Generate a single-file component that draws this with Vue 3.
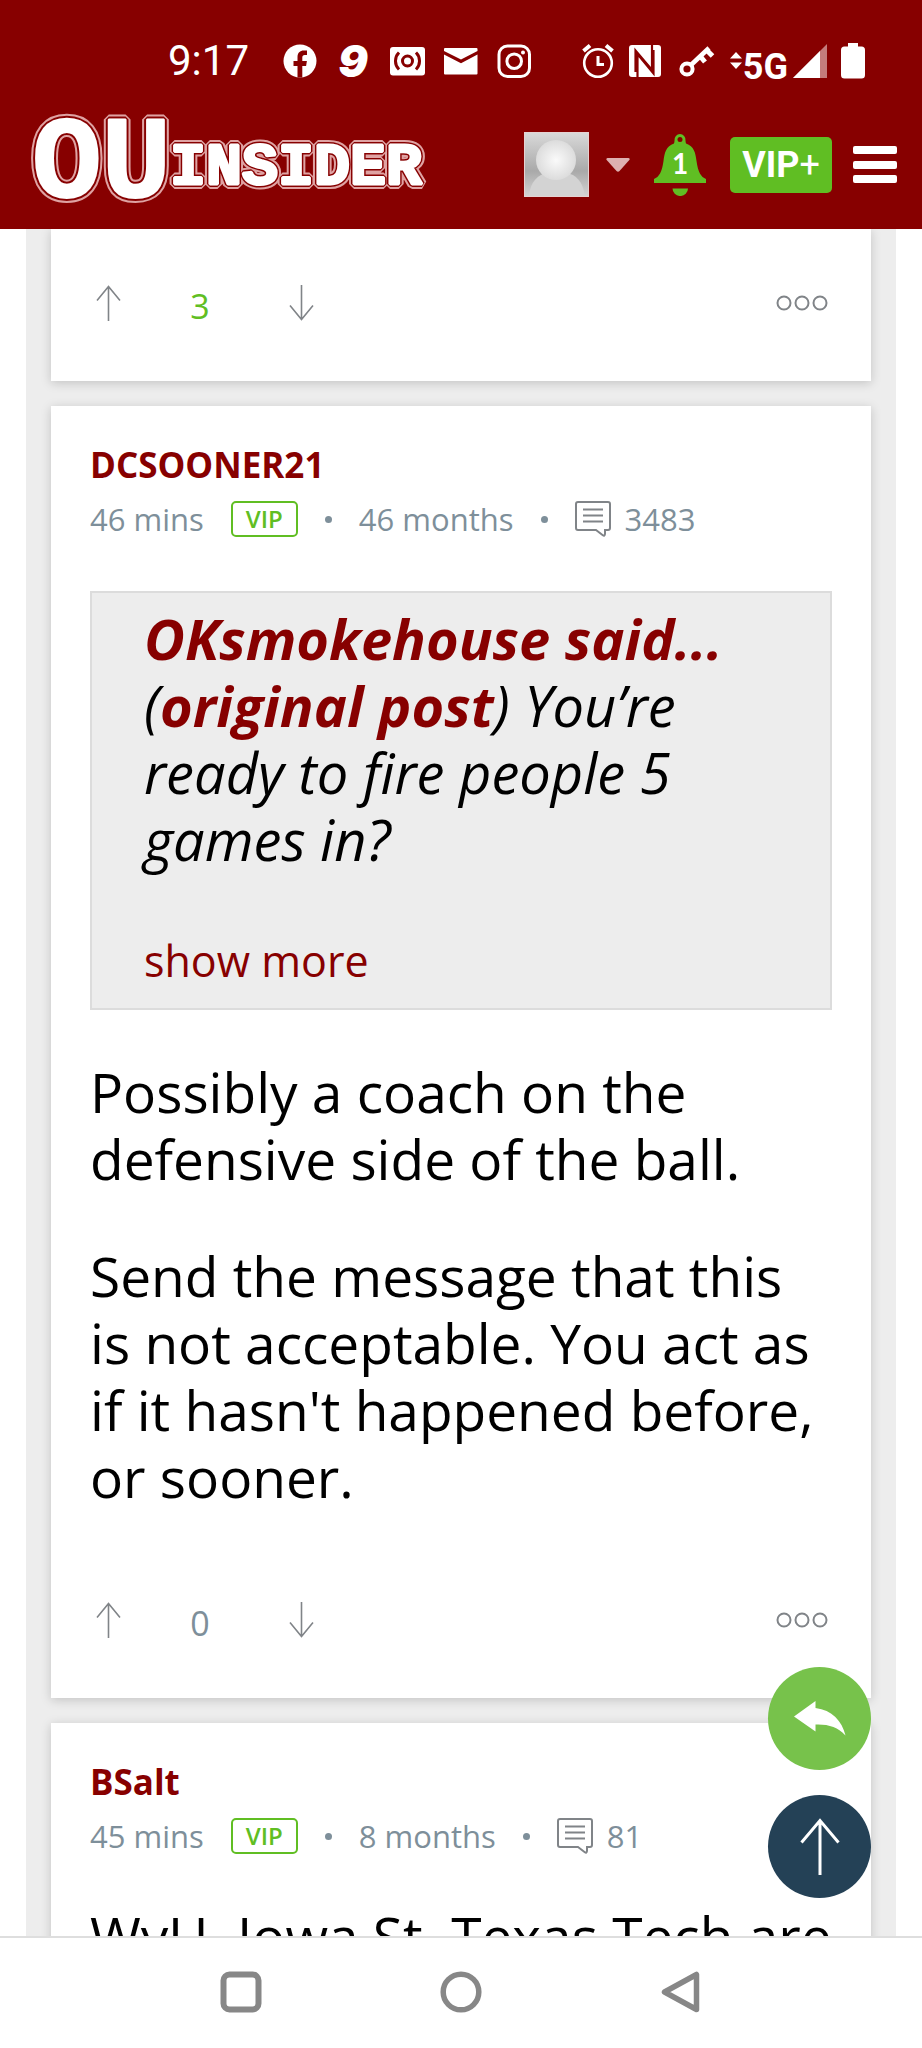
<script setup>
const posts = [
  { id: 1, votes: 3, liked: true },
  {
    id: 2,
    author: 'DCSOONER21',
    age: '46 mins',
    tenure: '46 months',
    count: '3483',
    quote: true,
    paragraphs: [
      'Possibly a coach on the defensive side of the ball.',
      "Send the message that this is not acceptable. You act as if it hasn't happened before, or sooner."
    ],
    votes: 0
  },
  {
    id: 3,
    author: 'BSalt',
    age: '45 mins',
    tenure: '8 months',
    count: '81',
    paragraphs: ['WyU, Iowa St, Texas Tech are'],
    votes: 0
  }
]
</script>

<template>
  <div class="screen">
    <header class="top">
      <div class="status">
        <span class="time">9:17</span>
        <div class="notices">
          <svg width="34" height="34" viewBox="0 0 34 34">
            <circle cx="17" cy="17" r="16.500" fill="#fff" />
            <path d="M14.500 33.500V22H10.500v-5h4v-4c0-4.300 2.500-6.500 6.300-6.500h3.200v4.500h-2.300c-1.700 0-2.400.9-2.400 2.500V17h4.600l-.8 5h-3.800v11.500z" fill="#870000" />
          </svg>
          <span class="nine">9</span>
          <svg width="36" height="34" viewBox="0 0 36 34">
            <rect x="1" y="3" width="35" height="28.500" rx="3" fill="#fff" />
            <g fill="none" stroke="#870000" stroke-width="3">
              <circle cx="18.500" cy="17" r="5" />
              <path d="M10 8.500a12 12 0 0 0 0 17M27 8.500a12 12 0 0 1 0 17" />
            </g>
          </svg>
          <svg width="34" height="34" viewBox="0 0 34 34">
            <path d="M0 5q0-1 1-1h31.500q1 0 1 1v2L17 15.500 0 7zM0 10.500l17 8.700 16.500-8.700V29.500q0 1-1 1H1q-1 0-1-1z" fill="#fff" />
          </svg>
          <svg width="34" height="34" viewBox="0 0 34 34" fill="none" stroke="#fff" stroke-width="3">
            <rect x="2" y="2" width="30.500" height="30.500" rx="8.500" />
            <circle cx="17.200" cy="17.200" r="7.300" />
            <circle cx="26" cy="8.500" r="2" fill="#fff" stroke="none" />
          </svg>
        </div>
        <div class="system">
          <svg width="32" height="36" viewBox="0 0 32 36" fill="none" stroke="#fff" stroke-width="2.600">
            <circle cx="16" cy="20" r="13.800" />
            <path d="M16 13v8.500h6" stroke-width="3" />
            <path d="M1.500 8l6.500-5.500M30.500 8L24 2.500" stroke-width="4" />
          </svg>
          <svg width="36" height="34" viewBox="0 0 36 34">
            <rect x="2" y="1" width="32" height="32" rx="3" fill="#fff" />
            <path d="M8.500 28V6.500L25 26V1M10.500 33V10L26.500 29.500V6" fill="none" stroke="#870000" stroke-width="2.200" />
          </svg>
          <svg width="40" height="34" viewBox="0 0 40 34" fill="none" stroke="#fff">
            <circle cx="11" cy="25" r="5.600" stroke-width="4" />
            <path d="M15 21L33 4" stroke-width="4.500" />
            <path d="M24 12l5 6M30.500 6l6 6" stroke-width="5" />
          </svg>
          <div class="network">
            <svg width="14" height="34" viewBox="0 0 14 34" fill="#fff">
              <path d="M1 14.500L7 8l6 6.500zM1 18.500h12L7 25z" />
            </svg>
            <span class="five-g">5G</span>
            <svg class="signal" width="36" height="36" viewBox="0 0 36 36">
              <path d="M35 1v34H1z" fill="#c47c7c" />
              <path d="M28 8v27H1z" fill="#fff" />
            </svg>
          </div>
          <svg width="24" height="36" viewBox="0 0 24 36">
            <path d="M7 0h10v3.500h3.500Q24 3.500 24 7v25q0 3.500-3.500 3.500h-17Q0 35.500 0 32V7q0-3.500 3.500-3.500H7z" fill="#fff" />
          </svg>
        </div>
      </div>

      <div class="bar">
        <a class="logo" href="#" aria-label="OU Insider">
          <svg width="396" height="100" viewBox="0 0 396 100" font-family="'Liberation Mono', monospace" font-weight="700" stroke-linejoin="bevel">
            <g font-size="116">
              <text x="1" y="82" fill="#dfa3a3" stroke="#dfa3a3" stroke-width="10">OU</text>
              <text x="1" y="82" fill="#870000" stroke="#870000" stroke-width="6">OU</text>
              <text x="1" y="82" fill="#fff" stroke="#fff" stroke-width="2">OU</text>
            </g>
            <g font-size="60">
              <text x="139" y="69" fill="#dfa3a3" stroke="#dfa3a3" stroke-width="10">INSIDER</text>
              <text x="139" y="69" fill="#870000" stroke="#870000" stroke-width="6">INSIDER</text>
              <text x="139" y="69" fill="#fff" stroke="#fff" stroke-width="3">INSIDER</text>
            </g>
          </svg>
        </a>
        <div class="tools">
          <button class="account" aria-label="Account">
            <svg width="65" height="65" viewBox="0 0 65 65">
              <defs>
                <linearGradient id="avatarBack" x1="0" y1="0" x2="0" y2="1">
                  <stop offset="0" stop-color="#dadada" />
                  <stop offset="0.600" stop-color="#a9a9a9" />
                  <stop offset="1" stop-color="#d5d5d5" />
                </linearGradient>
                <radialGradient id="avatarHead">
                  <stop offset="0" stop-color="#fafafa" />
                  <stop offset="1" stop-color="#dcdcdc" />
                </radialGradient>
              </defs>
              <rect width="65" height="65" fill="url(#avatarBack)" />
              <path d="M5 64C6 50 14 42 24 41h18c10 1 17 9 19 23z" fill="#d3d3d3" />
              <circle cx="32" cy="28" r="20" fill="url(#avatarHead)" />
              <rect x="0.500" y="0.500" width="64" height="64" fill="none" stroke="#e6d2d2" />
            </svg>
            <svg width="24" height="14" viewBox="0 0 24 14">
              <path d="M1.500 0h21q2 .5.8 2L13.500 13q-1.500 1.300-3 0L.7 2Q-.4.500 1.500 0z" fill="#deb0b0" />
            </svg>
          </button>
          <button class="alerts" aria-label="Notifications">
            <svg width="52" height="62" viewBox="0 0 52 62">
              <path d="M26 0a6 6 0 0 0-5.500 6.500q0 1.500-.5 3C12 12 10.500 19 9.500 27 8 38 5 43 0 45v4h52v-4c-5-2-8-7-9.500-18C41.500 19 40 12 32 9.500q-.5-1.500-.5-3A6 6 0 0 0 26 0z" fill="#60be23" />
              <circle cx="26" cy="5.500" r="2.500" fill="#870000" />
              <path d="M18.500 54.500h15.500a7.700 7.500 0 0 1-15.500 0z" fill="#60be23" />
              <text x="26" y="40" text-anchor="middle" font-family="Lato, sans-serif" font-weight="700" font-size="28" fill="#fff">1</text>
            </svg>
          </button>
          <button class="vip-button">VIP<span class="plus">+</span></button>
          <button class="menu" aria-label="Menu">
            <svg width="44" height="38" viewBox="0 0 44 38" fill="#fff">
              <rect width="44" height="8" rx="2" />
              <rect y="15" width="44" height="8" rx="2" />
              <rect y="29" width="44" height="8" rx="2" />
            </svg>
          </button>
        </div>
      </div>
    </header>

    <main class="content">
      <div class="thread">
        <article v-for="post in posts" :key="post.id" class="card">
          <template v-if="post.author">
            <a class="author" href="#">{{ post.author }}</a>
            <div class="meta">
              <span>{{ post.age }}</span>
              <span class="badge">VIP</span>
              <span class="dot"></span>
              <span>{{ post.tenure }}</span>
              <span class="dot"></span>
              <span class="count">
                <svg width="36" height="36" viewBox="0 0 36 36" fill="none" stroke="#808488" stroke-width="2">
                  <path d="M3 1h30q2 0 2 2v24q0 2-2 2h-3v4q-.3 2.500-2.200 1.200L21 29H3q-2 0-2-2V3q0-2 2-2z" />
                  <path d="M8 8.500h20M8 14.500h20M8 20.500h20" />
                </svg>
                {{ post.count }}
              </span>
            </div>
            <blockquote v-if="post.quote" class="quote">
              <p><a href="#">OKsmokehouse said...</a><br />(<a href="#">original post</a>) You’re ready to fire people 5 games in?</p>
              <button class="more">show more</button>
            </blockquote>
            <div class="body">
              <p v-for="(text, i) in post.paragraphs" :key="i">{{ text }}</p>
            </div>
          </template>
          <div class="votes">
            <button aria-label="Vote up">
              <svg width="26" height="36" viewBox="0 0 26 36" fill="none" stroke="#808488" stroke-width="1.600">
                <path d="M12.500 36V1.500M1 15.500l11.500-14 11.500 14" />
              </svg>
            </button>
            <span class="score" :class="{ liked: post.liked }">{{ post.votes }}</span>
            <button aria-label="Vote down">
              <svg width="26" height="36" viewBox="0 0 26 36" fill="none" stroke="#808488" stroke-width="1.600">
                <path d="M12.500 0v34.500M1 20.500l11.500 14 11.500-14" />
              </svg>
            </button>
            <button class="options" aria-label="More options">
              <svg width="52" height="16" viewBox="0 0 52 16" fill="none" stroke="#808488" stroke-width="2">
                <circle cx="8" cy="8" r="6.500" />
                <circle cx="26" cy="8" r="6.500" />
                <circle cx="44" cy="8" r="6.500" />
              </svg>
            </button>
          </div>
        </article>
      </div>
      <div class="floating">
        <button class="reply" aria-label="Reply">
          <svg width="52" height="36" viewBox="0 0 52 36">
            <path d="M0 15.500L21.500 0v7C38 9 48 20 51.500 34.500 44 26 34 23 21.500 23.500V30.500z" fill="#fff" />
          </svg>
        </button>
        <button class="to-top" aria-label="Back to top">
          <svg width="40" height="57" viewBox="0 0 40 57" fill="none" stroke="#fff" stroke-width="3">
            <path d="M20 57V2M1.500 24.500L20 2.500l18.500 22" />
          </svg>
        </button>
      </div>
    </main>

    <nav class="system-nav" aria-label="System navigation">
      <button aria-label="Recent apps">
        <svg width="42" height="42" viewBox="0 0 42 42" fill="none" stroke="#878787" stroke-width="6">
          <rect x="3.500" y="3.500" width="35" height="35" rx="6" />
        </svg>
      </button>
      <button aria-label="Home">
        <svg width="42" height="42" viewBox="0 0 42 42" fill="none" stroke="#878787" stroke-width="5.500">
          <circle cx="21" cy="21" r="17.800" />
        </svg>
      </button>
      <button aria-label="Back">
        <svg width="42" height="42" viewBox="0 0 42 42" fill="none" stroke="#878787" stroke-width="5.500" stroke-linejoin="round">
          <path d="M36.500 3.500v35L4.500 21z" />
        </svg>
      </button>
    </nav>
  </div>
</template>

<style>
body {
  margin: 0;
}
</style>

<style scoped>
.screen {
  display: flex;
  flex-direction: column;
  height: 100vh;
  overflow: hidden;
  background: #fff;
  color: #000;
  font-family: "Open Sans", "Noto Sans", sans-serif;
}
button {
  padding: 0;
  border: 0;
  background: none;
  color: inherit;
  font: inherit;
  cursor: pointer;
}
svg {
  display: block;
  flex: none;
}
a {
  color: #870000;
  text-decoration: none;
}
p {
  margin: 0;
}
.top {
  flex: none;
  background: #870000;
  color: #fff;
}
.status {
  display: flex;
  align-items: center;
  height: 78px;
  padding: 22px 57px 0 168px;
}
.time {
  width: 84px;
  font: 42px/48px Roboto, sans-serif;
}
.notices {
  display: flex;
  align-items: center;
  gap: 19px;
  margin-left: 31px;
}
.nine {
  width: 34px;
  text-align: center;
  font: italic 900 44px/44px Inter, sans-serif;
}
.system {
  display: flex;
  align-items: center;
  gap: 13px;
  margin-left: auto;
}
.network {
  display: flex;
  align-items: center;
}
.five-g {
  padding-top: 12px;
  font: 700 36px/44px Roboto, sans-serif;
}
.signal {
  margin-left: 4px;
}
.bar {
  display: flex;
  align-items: center;
  justify-content: space-between;
  height: 129px;
  padding: 0 25px 0 31px;
}
.logo svg {
  overflow: visible;
}
.tools {
  display: flex;
  align-items: center;
  gap: 24px;
}
.account {
  display: flex;
  align-items: center;
  gap: 17px;
}
.vip-button {
  width: 102px;
  height: 56px;
  margin-right: -3px;
  border-radius: 5px;
  background: #60be23;
  font: 700 36px/56px Roboto, sans-serif;
}
.plus {
  font-weight: 400;
}
.content {
  position: relative;
  flex: 1;
  min-height: 0;
  overflow: hidden;
}
.thread {
  display: flex;
  flex-direction: column;
  gap: 25px;
  margin: 0 26px;
  padding: 0 25px;
  background: #ededed;
}
.card {
  padding: 39px 39px 0;
  background: #fff;
  box-shadow: 0 2px 10px rgba(0, 0, 0, 0.18);
}
.author {
  display: block;
  font-size: 35px;
  line-height: 40px;
  font-weight: 700;
}
.meta {
  display: flex;
  align-items: center;
  height: 36px;
  margin-top: 16px;
  gap: 27px;
  color: #7e8f9a;
  font-size: 31px;
  line-height: 36px;
}
.badge {
  box-sizing: border-box;
  width: 67px;
  border: 2px solid #60be23;
  border-radius: 5px;
  color: #60be23;
  font-size: 24px;
  line-height: 32px;
  font-weight: 600;
  text-align: center;
}
.dot {
  width: 7px;
  height: 7px;
  border-radius: 50%;
  background: #7e8f9a;
}
.count {
  display: flex;
  align-items: center;
  gap: 14px;
}
.quote {
  margin: 54px 0 0;
  padding: 12px 50px 14px 52px;
  border: 2px solid #dcdcdc;
  background: #ededed;
  font-size: 56px;
  line-height: 67px;
  font-style: italic;
}
.quote a {
  font-weight: 700;
}
.more {
  display: block;
  margin-top: 54px;
  color: #870000;
  font-size: 43px;
  line-height: 67px;
  font-style: normal;
}
.body {
  display: flex;
  flex-direction: column;
  gap: 50px;
  margin-top: 48px;
  font-size: 55px;
  line-height: 67px;
}
.votes {
  display: flex;
  align-items: center;
  margin-top: 92px;
  padding: 0 4px 60px 6px;
}
.card:first-child .votes {
  margin-top: 17px;
}
.score {
  width: 156px;
  padding-top: 6px;
  margin-right: 11px;
  text-align: center;
  color: #7e8f9a;
  font-size: 34px;
  line-height: 30px;
}
.score.liked {
  color: #60be23;
}
.options {
  margin-left: auto;
}
.floating {
  position: absolute;
  right: 51px;
  bottom: 38px;
  display: flex;
  flex-direction: column;
  gap: 25px;
}
.floating button {
  display: grid;
  place-items: center;
  width: 103px;
  height: 103px;
  border-radius: 50%;
}
.reply {
  background: #77c24b;
}
.to-top {
  background: #244156;
}
.system-nav {
  display: flex;
  flex: none;
  align-items: center;
  justify-content: center;
  gap: 178px;
  height: 108px;
  padding-bottom: 2px;
  border-top: 2px solid #dedede;
}
</style>
